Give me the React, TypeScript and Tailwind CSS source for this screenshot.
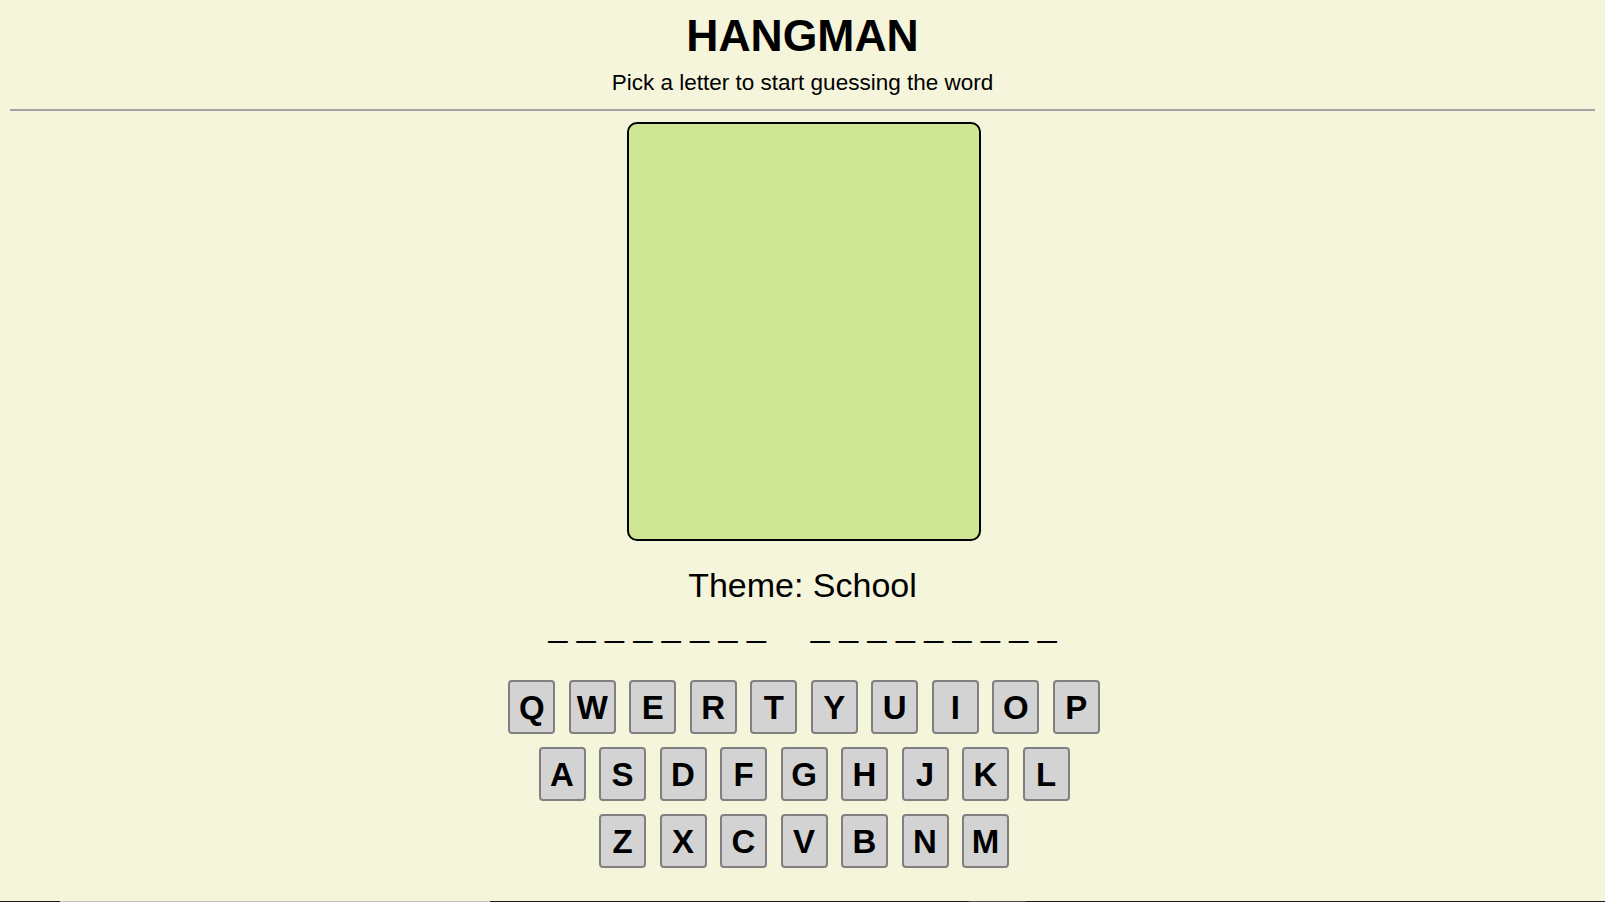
const rows = [
  ['Q', 'W', 'E', 'R', 'T', 'Y', 'U', 'I', 'O', 'P'],
  ['A', 'S', 'D', 'F', 'G', 'H', 'J', 'K', 'L'],
  ['Z', 'X', 'C', 'V', 'B', 'N', 'M'],
];

// hidden word, one entry per word, length only
const words = [8, 9];

function Key({ letter }: { letter: string }) {
  return (
    <button className="w-[47px] h-[54px] flex items-center justify-center bg-[#d3d3d3] border-2 border-[#808080] rounded-[4px] text-[33px] font-bold leading-none text-black">
      {letter}
    </button>
  );
}

function App() {
  return (
    <div className="min-h-screen bg-[#f5f5dc] px-[10px] text-black font-['Liberation_Sans',Arial,sans-serif]">
      <h1 className="pt-[11px] text-center text-[44.5px] font-bold leading-[50px]">HANGMAN</h1>
      <p className="mt-[9px] text-center text-[22.5px] leading-[26px]">Pick a letter to start guessing the word</p>
      <div className="mt-[13px] h-[2px] bg-[#a3a3a3]" />

      <div className="flex flex-col items-center">
        <div className="mt-[11px] ml-[3px] w-[354px] h-[419px] bg-[#cfe795] border-2 border-black rounded-[10px]" />

        <p className="mt-[24px] text-[34px] leading-[40px]">Theme: School</p>

        <div className="-mt-[1px] flex gap-[45px] text-[34px] leading-[40px] whitespace-pre">
          {words.map((n, i) => (
            <span key={i}>{Array(n).fill('_').join(' ')}</span>
          ))}
        </div>

        <div className="mt-[36px] pl-[3px] flex flex-col items-center gap-[13px]">
          {rows.map((row, i) => (
            <div key={i} className="flex gap-[13.5px]">
              {row.map((l) => (
                <Key key={l} letter={l} />
              ))}
            </div>
          ))}
        </div>
      </div>

      {/* taskbar edge peeking in at the bottom of the window */}
      <div className="fixed bottom-0 left-0 right-0 h-px flex">
        <div className="w-[60px] bg-[#1c1c1c]" />
        <div className="w-[430px] bg-[#c4c4c4]" />
        <div className="w-[479px] bg-[#1c1c1c]" />
        <div className="w-[57px] bg-[#4a4a4a]" />
        <div className="flex-1 bg-[#1c1c1c]" />
      </div>
    </div>
  );
}

export default App;
